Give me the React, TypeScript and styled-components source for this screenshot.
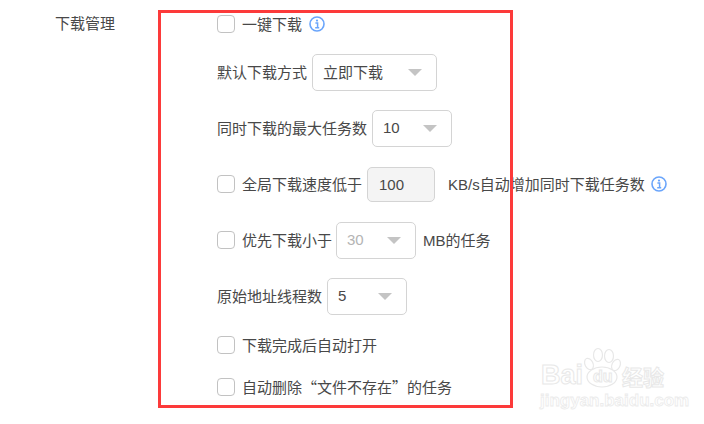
import React from "react";
import styled, { createGlobalStyle } from "styled-components";

const GlobalStyle = createGlobalStyle`
	html, body {
		margin: 0;
		padding: 0;
		background: #ffffff;
	}
	body {
		font-family: "Liberation Sans", "Noto Sans CJK SC", sans-serif;
		font-size: 15px;
		color: #484848;
	}
`;

const Page = styled.div`
	position: relative;
	width: 704px;
	height: 424px;
	overflow: hidden;
	padding-top: 4px;
	box-sizing: border-box;
`;

const Section = styled.div`
	display: grid;
	grid-template-columns: 162px 1fr;
	padding-left: 55px;
`;

const SectionTitle = styled.div`
	height: 40px;
	line-height: 40px;
`;

const Options = styled.div`
	display: flex;
	flex-direction: column;
`;

const Row = styled.div<{ $height: number }>`
	display: flex;
	align-items: center;
	height: ${({ $height }) => $height}px;
	white-space: nowrap;
`;

const Text = styled.span`
	padding-bottom: 2px;
`;

const Quote = styled.span<{ $open?: boolean }>`
	display: inline-block;
	width: 15px;
	text-align: ${({ $open }) => ($open ? "right" : "left")};
	font-family: "Noto Sans CJK SC", sans-serif;
`;

const Box = styled.span`
	width: 16px;
	height: 16px;
	border: 1px solid #c2c2c2;
	border-radius: 4px;
	margin-right: 7px;
	flex: none;
`;

const SelectBox = styled.div<{ $width: number; $disabled?: boolean }>`
	display: flex;
	align-items: center;
	justify-content: space-between;
	box-sizing: border-box;
	width: ${({ $width }) => $width}px;
	height: 37px;
	padding: 0 14px 0 10px;
	margin: 0 ${({ $disabled }) => ($disabled ? "7px" : "0")} 0 ${({ $disabled }) => ($disabled ? "4px" : "5px")};
	border: 1px solid #d4d4d4;
	border-radius: 5px;
	color: ${({ $disabled }) => ($disabled ? "#b4b4b4" : "#484848")};
`;

const Arrow = styled.span`
	width: 0;
	height: 0;
	border-left: 7px solid transparent;
	border-right: 7px solid transparent;
	border-top: 7px solid #c4c4c4;
`;

const NumberBox = styled.div`
	box-sizing: border-box;
	width: 68px;
	height: 35px;
	line-height: 33px;
	padding-left: 11px;
	margin: 0 13px 0 5px;
	background: #f4f4f4;
	border: 1px solid #d4d4d4;
	border-radius: 5px;
`;

const Tip = styled.svg<{ $gap: number }>`
	width: 16px;
	height: 16px;
	margin-left: ${({ $gap }) => $gap}px;
	flex: none;
`;

const Highlight = styled.div`
	position: absolute;
	left: 158px;
	top: 10px;
	width: 355px;
	height: 398px;
	box-sizing: border-box;
	border: 3px solid #fc3a3a;
	pointer-events: none;
`;

const Watermark = styled.div`
	position: absolute;
	left: 540px;
	top: 347px;
	width: 140px;
	height: 62px;
	font-weight: bold;
	color: #ffffff;
	-webkit-text-stroke: 1px #e8e8e8;
`;

const WatermarkName = styled.span`
	position: absolute;
	left: 1px;
	top: 13px;
	font-size: 27px;
	line-height: 30px;
`;

const WatermarkDu = styled.span`
	position: absolute;
	left: 53px;
	top: 21px;
	font-size: 16px;
	line-height: 18px;
`;

const WatermarkCn = styled.span`
	position: absolute;
	left: 82px;
	top: 15px;
	font-size: 21px;
	line-height: 28px;
	font-family: "Noto Sans CJK SC", sans-serif;
`;

const WatermarkUrl = styled.span`
	position: absolute;
	left: 0;
	top: 45px;
	font-size: 17px;
	line-height: 18px;
	-webkit-text-stroke: 0.8px #ebebeb;
`;

const Paw = styled.svg`
	position: absolute;
	left: 43px;
	top: 0;
	width: 40px;
	height: 42px;
`;

const InfoIcon = ({ gap }: { gap: number }) => (
	<Tip $gap={gap} viewBox="0 0 16 16">
		<circle cx="8" cy="8" r="7" fill="none" stroke="#6aa5fb" strokeWidth="1.6" />
		<circle cx="8" cy="4.6" r="1.1" fill="#6aa5fb" />
		<path d="M6.4 7h2.2v4.5M6.2 11.8h4" fill="none" stroke="#6aa5fb" strokeWidth="1.5" />
	</Tip>
);

const Select = ({ value, width, disabled }: { value: string; width: number; disabled?: boolean }) => (
	<SelectBox $width={width} $disabled={disabled}>
		<Text>{value}</Text>
		<Arrow />
	</SelectBox>
);

export default function App() {
	return (
		<Page lang="zh-CN">
			<GlobalStyle />
			<Section>
				<SectionTitle>下载管理</SectionTitle>
				<Options>
					<Row $height={40}>
						<Box />
						<Text>一键下载</Text>
						<InfoIcon gap={7} />
					</Row>
					<Row $height={56}>
						<Text>默认下载方式</Text>
						<Select value="立即下载" width={125} />
					</Row>
					<Row $height={56}>
						<Text>同时下载的最大任务数</Text>
						<Select value="10" width={80} />
					</Row>
					<Row $height={56}>
						<Box />
						<Text>全局下载速度低于</Text>
						<NumberBox>100</NumberBox>
						<Text>KB/s自动增加同时下载任务数</Text>
						<InfoIcon gap={6} />
					</Row>
					<Row $height={56}>
						<Box />
						<Text>优先下载小于</Text>
						<Select value="30" width={80} disabled />
						<Text>MB的任务</Text>
					</Row>
					<Row $height={56}>
						<Text>原始地址线程数</Text>
						<Select value="5" width={80} />
					</Row>
					<Row $height={42}>
						<Box />
						<Text>下载完成后自动打开</Text>
					</Row>
					<Row $height={42}>
						<Box />
						<Text>
							自动删除<Quote $open>“</Quote>文件不存在<Quote>”</Quote>的任务
						</Text>
					</Row>
				</Options>
			</Section>
			<Highlight />
			<Watermark>
				<Paw viewBox="0 0 40 42">
					<g fill="#ffffff" stroke="#e8e8e8" strokeWidth="1.2">
						<ellipse cx="6" cy="17" rx="4" ry="6" transform="rotate(-25 6 17)" />
						<ellipse cx="15" cy="8" rx="4.5" ry="6.5" />
						<ellipse cx="26" cy="9" rx="4.5" ry="6.5" />
						<ellipse cx="33" cy="18" rx="4" ry="6" transform="rotate(25 33 18)" />
						<ellipse cx="19" cy="30" rx="15" ry="10" />
					</g>
				</Paw>
				<WatermarkName>Bai</WatermarkName>
				<WatermarkDu>du</WatermarkDu>
				<WatermarkCn>经验</WatermarkCn>
				<WatermarkUrl>jingyan.baidu.com</WatermarkUrl>
			</Watermark>
		</Page>
	);
}
